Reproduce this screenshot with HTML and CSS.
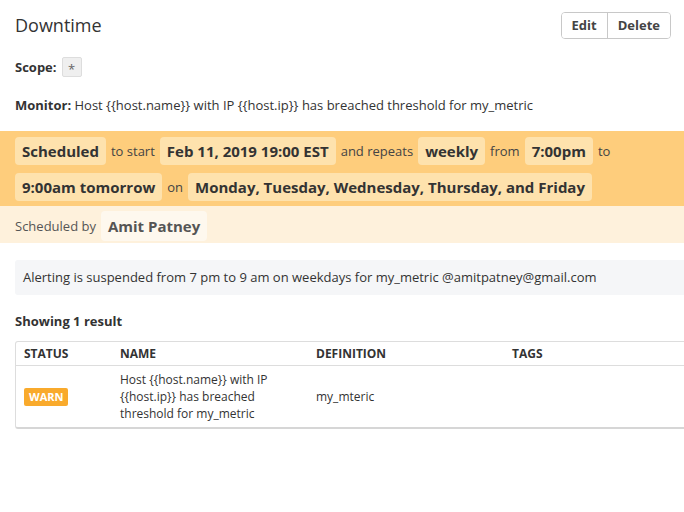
FILE: index.html
```html
<!DOCTYPE html>
<html>
<head>
<meta charset="utf-8">
<link rel="stylesheet" href="styles.css">
</head>
<body>
<div class="page">
  <div class="header">
    <h1 class="title">Downtime</h1>
    <div class="btn-group">
      <button class="btn">Edit</button>
      <button class="btn">Delete</button>
    </div>
  </div>
  <div class="scope"><span class="label">Scope:</span><span class="scope-chip">*</span></div>
  <div class="monitor"><span class="label">Monitor:</span> Host {{host.name}} with IP {{host.ip}} has breached threshold for my_metric</div>

  <div class="band">
    <span class="chip">Scheduled</span><span class="word">to start</span>
    <span class="chip">Feb 11, 2019 19:00 EST</span><span class="word">and repeats</span>
    <span class="chip">weekly</span><span class="word">from</span>
    <span class="chip">7:00pm</span><span class="word">to</span>
    <span class="chip">9:00am tomorrow</span><span class="word">on</span>
    <span class="chip">Monday, Tuesday, Wednesday, Thursday, and Friday</span>
  </div>
  <div class="band-light">
    <span class="word">Scheduled by</span><span class="chip-light">Amit Patney</span>
  </div>

  <div class="alert">Alerting is suspended from 7 pm to 9 am on weekdays for my_metric @amitpatney@gmail.com</div>

  <div class="results">Showing 1 result</div>

  <table class="table">
    <colgroup>
      <col class="c1"><col class="c2"><col class="c3"><col class="c4">
    </colgroup>
    <thead>
      <tr><th>STATUS</th><th>NAME</th><th>DEFINITION</th><th>TAGS</th></tr>
    </thead>
    <tbody>
      <tr>
        <td><span class="warn">WARN</span></td>
        <td class="name">Host {{host.name}} with IP {{host.ip}} has breached threshold for my_metric</td>
        <td>my_mteric</td>
        <td></td>
      </tr>
    </tbody>
  </table>
</div>
</body>
</html>
```
FILE: styles.css
```css
html, body {
  margin: 0;
  padding: 0;
  background: #fff;
  overflow: hidden;
}
body {
  font-family: "Open Sans", "Noto Sans", sans-serif;
  color: #333;
  font-size: 13px;
}
.page {
  padding: 0 13px 0 15px;
  overflow: hidden;
}
.header {
  height: 50px;
  display: flex;
  align-items: center;
  justify-content: space-between;
}
.title {
  margin: 0;
  font-size: 18px;
  font-weight: 400;
  line-height: 24px;
  color: #333;
}
.btn-group {
  display: flex;
  border: 1px solid #c8c8c8;
  border-radius: 4px;
  overflow: hidden;
}
.btn {
  height: 25px;
  padding: 0 10px;
  background: #fff;
  border: none;
  font-family: "Open Sans", "Noto Sans", sans-serif;
  font-size: 13px;
  font-weight: 700;
  color: #444;
}
.btn + .btn {
  border-left: 1px solid #c8c8c8;
}
.label {
  font-weight: 700;
  color: #333;
}
.scope {
  margin-top: 7px;
  display: flex;
  align-items: center;
  gap: 5px;
  height: 20px;
}
.scope-chip {
  width: 18px;
  height: 18px;
  background: #efefef;
  border: 1px solid #ddd;
  border-radius: 2px;
  color: #666;
  font-size: 13px;
  line-height: 22px;
  text-align: center;
}
.monitor {
  margin-top: 19px;
  line-height: 18px;
}
.band {
  margin: 17px -13px 0 -15px;
  padding: 6px 15px 5px;
  background: #fecd7c;
  display: flex;
  flex-wrap: wrap;
  align-items: center;
  row-gap: 8px;
  column-gap: 5px;
}
.chip {
  height: 28px;
  line-height: 28px;
  padding: 0 7px;
  background: #fee2ad;
  border-radius: 4px;
  font-size: 15px;
  font-weight: 700;
  color: #333;
}
.word {
  font-size: 13px;
  color: #444;
}
.band-light {
  margin: 0 -13px 0 -15px;
  padding: 5px 15px 2px;
  background: #fef1dc;
  display: flex;
  align-items: center;
  gap: 5px;
}
.band-light .word {
  color: #555;
}
.chip-light {
  height: 30px;
  line-height: 30px;
  padding: 0 7px;
  background: #fef8ee;
  border-radius: 4px;
  font-size: 15px;
  font-weight: 700;
  color: #555;
}
.alert {
  margin-top: 17px;
  width: 676px;
  padding: 8px 0 8px 8px;
  line-height: 19px;
  background: #f5f6f8;
  border-radius: 3px;
  color: #333;
}
.results {
  margin-top: 17px;
  font-weight: 700;
  line-height: 18px;
}
.table {
  margin-top: 11px;
  width: 684px;
  table-layout: fixed;
  border-collapse: separate;
  border-spacing: 0;
  border: 1px solid #ddd;
  border-bottom: 2px solid #d6d6d6;
  border-radius: 3px;
}
.c1 { width: 96px; }
.c2 { width: 196px; }
.c3 { width: 196px; }
.c4 { width: 196px; }
.table th {
  text-align: left;
  font-size: 12px;
  font-weight: 700;
  color: #333;
  height: 23px;
  padding: 0 8px;
  border-bottom: 1px solid #ddd;
}
.table td {
  font-size: 12px;
  line-height: 17px;
  color: #333;
  padding: 5px 8px 5px;
  vertical-align: middle;
}
.table td.name {
  padding-right: 20px;
}
.warn {
  display: inline-block;
  height: 18px;
  line-height: 18px;
  padding: 0 5px;
  background: #f9aa2c;
  color: #fff;
  font-size: 11px;
  font-weight: 700;
  border-radius: 2px;
}
```
